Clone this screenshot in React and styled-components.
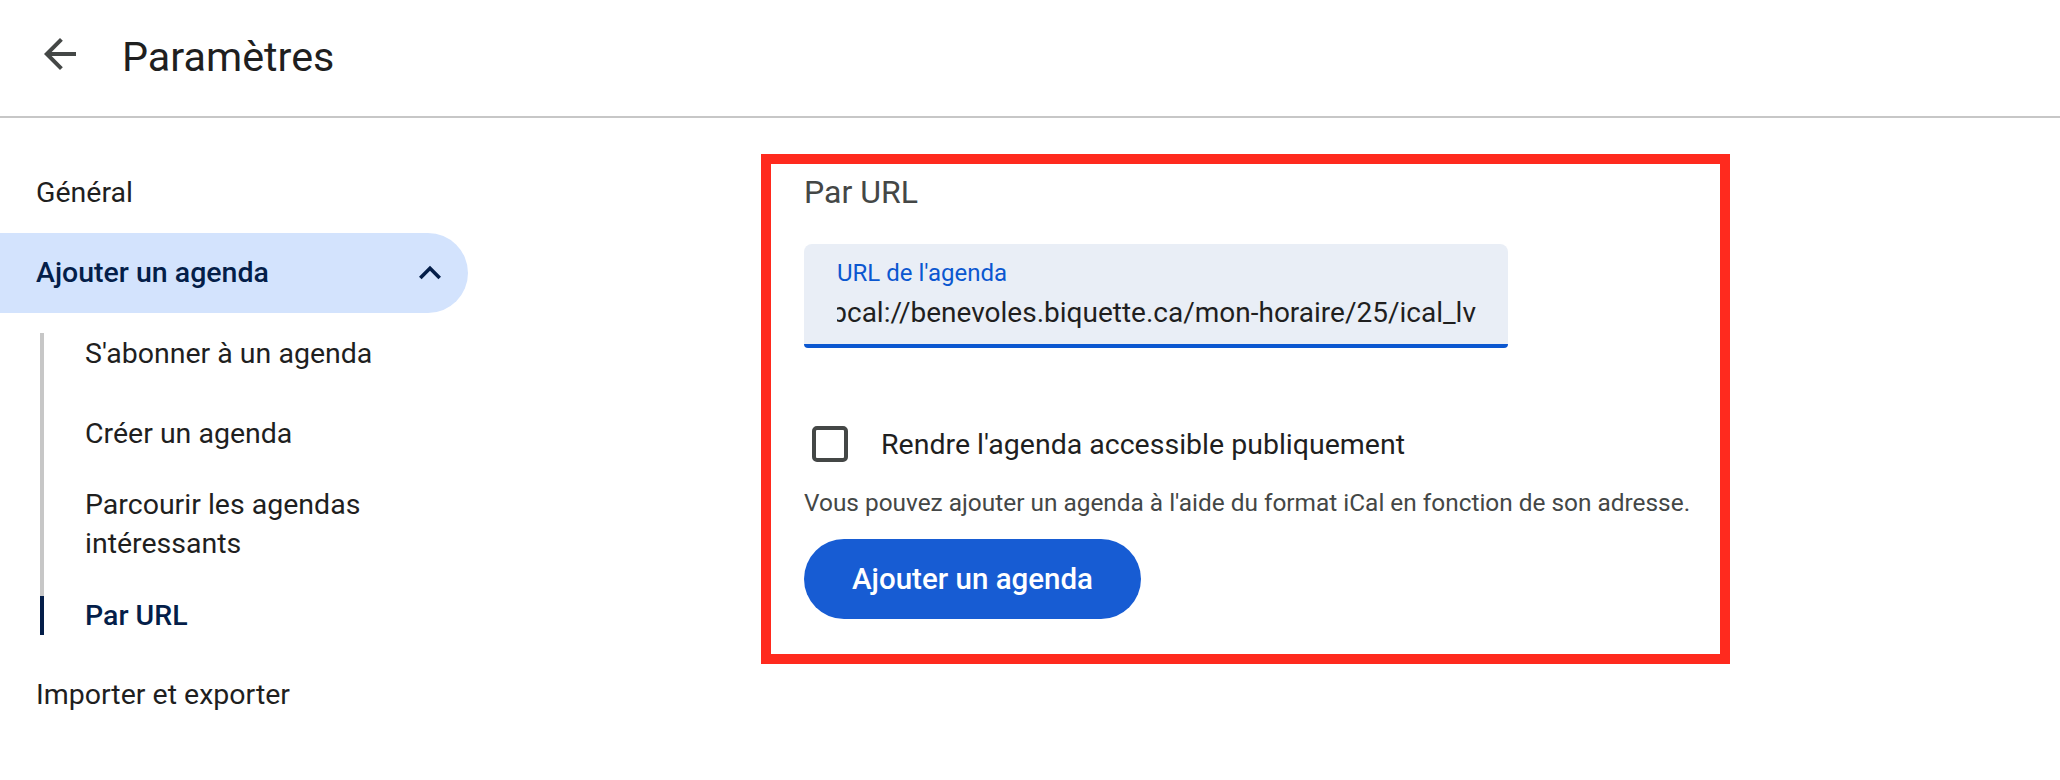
import React from 'react'
import styled, { createGlobalStyle } from 'styled-components'

const GlobalStyle = createGlobalStyle`
  html, body {
    margin: 0;
    padding: 0;
    background: #fff;
  }
  body {
    font-family: Roboto, "Liberation Sans", Arial, sans-serif;
    color: #1f1f1f;
  }
`

const Page = styled.div`
  width: 2060px;
  min-height: 780px;
  background: #fff;
`

const Header = styled.header`
  height: 118px;
  box-sizing: border-box;
  padding: 0 0 8px 36px;
  display: flex;
  align-items: center;
  border-bottom: 2px solid #c7c7c7;
`

const IconButton = styled.button`
  width: 48px;
  height: 48px;
  padding: 0;
  border: 0;
  background: none;
  display: flex;
  align-items: center;
  justify-content: center;
  color: ${({ color }) => color || '#444746'};
  cursor: pointer;
`

const Title = styled.h1`
  margin: 6px 0 0 38px;
  font-size: 41.3px;
  line-height: 40px;
  font-weight: 400;
  color: #1f1f1f;
`

const Layout = styled.div`
  display: flex;
`

const Sidebar = styled.nav`
  width: 468px;
  flex-shrink: 0;
  padding-top: 35px;
`

const NavItem = styled.div`
  height: 80px;
  box-sizing: border-box;
  display: flex;
  align-items: center;
  justify-content: space-between;
  padding: 0 14px 0 36px;
  font-size: 28.5px;
  line-height: 40px;
  font-weight: ${({ active }) => active ? 500 : 400};
  color: ${({ active }) => active ? '#041e49' : '#1f1f1f'};
  background: ${({ active }) => active ? '#d3e3fd' : 'transparent'};
  border-radius: 0 40px 40px 0;
`

const SubList = styled.div`
  margin-left: 40px;
  display: flex;
  flex-direction: column;
  background: linear-gradient(#c7c7c7, #c7c7c7) 0 20px / 4px calc(100% - 40px) no-repeat;
`

const SubItem = styled.div`
  min-height: 80px;
  box-sizing: border-box;
  padding: 12px 0;
  display: flex;
  align-items: center;
`

const SubLabel = styled.span`
  display: block;
  padding-left: ${({ active }) => active ? '41px' : '45px'};
  border-left: ${({ active }) => active ? '4px solid #041e49' : '0'};
  font-size: 28.5px;
  line-height: 39px;
  font-weight: ${({ active }) => active ? 500 : 400};
  color: ${({ active }) => active ? '#041e49' : '#1f1f1f'};
`

const Main = styled.main`
  padding: 36px 0 0 293px;
`

const Highlight = styled.section`
  width: 969px;
  box-sizing: border-box;
  border: 10px solid #ff2a1e;
  padding: 8px 0 35px 33px;
`

const SectionTitle = styled.h2`
  margin: 0 0 32px;
  font-size: 32px;
  line-height: 40px;
  font-weight: 400;
  color: #444746;
`

const Field = styled.div`
  width: 704px;
  box-sizing: border-box;
  padding: 17px 32px 13px 33px;
  background: #e9eef6;
  border-radius: 8px 8px 4px 4px;
  border-bottom: 4px solid #0b57d0;
`

const FieldLabel = styled.div`
  font-size: 24px;
  line-height: 24px;
  color: #0b57d0;
`

const FieldValue = styled.div`
  margin-top: 10px;
  display: flex;
  justify-content: flex-end;
  overflow: hidden;
  white-space: nowrap;
  font-size: 28px;
  line-height: 36px;
  color: #1f1f1f;

  span {
    flex-shrink: 0;
  }
`

const CheckRow = styled.label`
  margin-top: 68px;
  height: 56px;
  display: flex;
  align-items: center;
  font-size: 28.5px;
  color: #1f1f1f;
`

const CheckBox = styled.span`
  width: 36px;
  height: 36px;
  box-sizing: border-box;
  margin: 0 33px 0 8px;
  border: 4px solid #444746;
  border-radius: 5px;
`

const Helper = styled.p`
  margin: 15px 0 0;
  font-size: 24.4px;
  line-height: 32px;
  color: #444746;
`

const PrimaryButton = styled.button`
  margin-top: 20px;
  height: 80px;
  padding: 0 48px;
  border: 0;
  border-radius: 40px;
  background: #175cd3;
  color: #fff;
  font-family: inherit;
  font-size: 29.5px;
  font-weight: 500;
  cursor: pointer;
`

const ArrowBack = () => (
  <svg width="48" height="48" viewBox="0 0 24 24" fill="currentColor">
    <path d="M20 11H7.83l5.59-5.59L12 4l-8 8 8 8 1.41-1.41L7.83 13H20v-2z" />
  </svg>
)

const ChevronUp = () => (
  <svg width="44" height="44" viewBox="0 0 24 24" fill="currentColor">
    <path d="M12 8l-6 6 1.41 1.41L12 10.83l4.59 4.58L18 14z" />
  </svg>
)

const subItems = [
  { label: "S'abonner à un agenda" },
  { label: 'Créer un agenda' },
  { label: 'Parcourir les agendas intéressants' },
  { label: 'Par URL', active: true },
]

const App = () => (
  <Page>
    <GlobalStyle />
    <Header>
      <IconButton aria-label="Retour">
        <ArrowBack />
      </IconButton>
      <Title>Paramètres</Title>
    </Header>
    <Layout>
      <Sidebar>
        <NavItem>Général</NavItem>
        <NavItem active>
          Ajouter un agenda
          <IconButton color="#041e49" as="span">
            <ChevronUp />
          </IconButton>
        </NavItem>
        <SubList>
          {subItems.map(item => (
            <SubItem key={item.label}>
              <SubLabel active={item.active}>{item.label}</SubLabel>
            </SubItem>
          ))}
        </SubList>
        <NavItem>Importer et exporter</NavItem>
      </Sidebar>
      <Main>
        <Highlight>
          <SectionTitle>Par URL</SectionTitle>
          <Field>
            <FieldLabel>URL de l'agenda</FieldLabel>
            <FieldValue>
              <span>webcal://benevoles.biquette.ca/mon-horaire/25/ical_lv</span>
            </FieldValue>
          </Field>
          <CheckRow>
            <CheckBox />
            Rendre l'agenda accessible publiquement
          </CheckRow>
          <Helper>
            Vous pouvez ajouter un agenda à l'aide du format iCal en fonction de son adresse.
          </Helper>
          <PrimaryButton>Ajouter un agenda</PrimaryButton>
        </Highlight>
      </Main>
    </Layout>
  </Page>
)

export default App
